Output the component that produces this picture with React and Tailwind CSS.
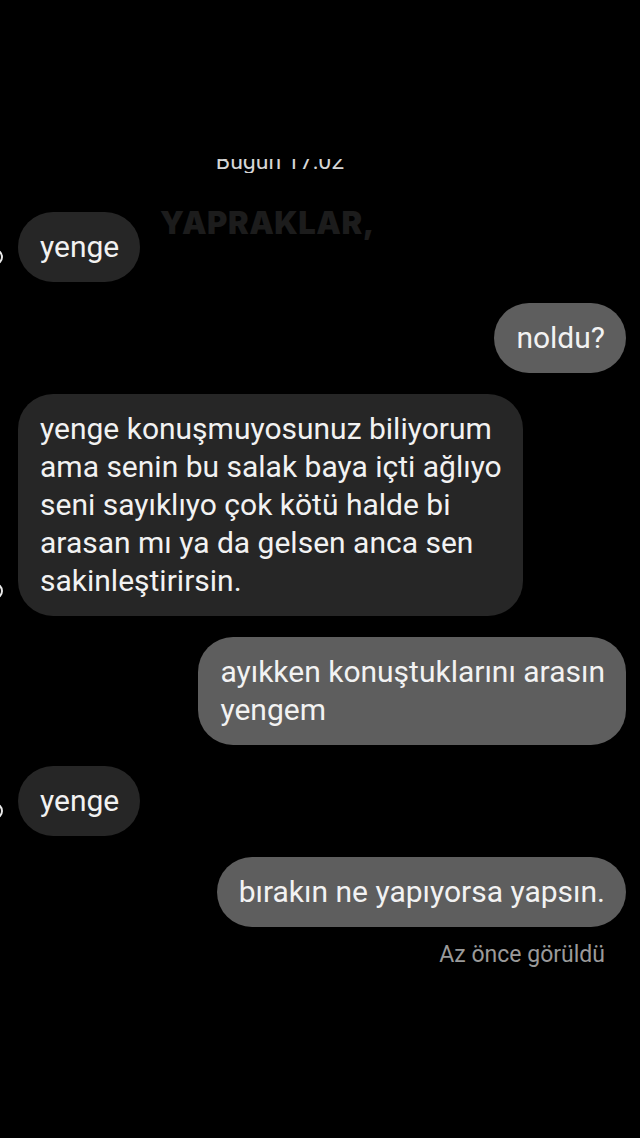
import React from 'react';

const messages = [
  { id: 1, side: 'left', lines: ['yenge'] },
  { id: 2, side: 'right', lines: ['noldu?'] },
  {
    id: 3,
    side: 'left',
    lines: [
      'yenge konuşmuyosunuz biliyorum',
      'ama senin bu salak baya içti ağlıyo',
      'seni sayıklıyo çok kötü halde bi',
      'arasan mı ya da gelsen anca sen',
      'sakinleştirirsin.',
    ],
  },
  { id: 4, side: 'right', lines: ['ayıkken konuştuklarını arasın', 'yengem'] },
  { id: 5, side: 'left', lines: ['yenge'] },
  { id: 6, side: 'right', lines: ['bırakın ne yapıyorsa yapsın.'] },
];

const Lines = ({ lines }) =>
  lines.map((line, i) => (
    <div key={i} className="whitespace-nowrap">
      {line}
    </div>
  ));

const Bubble = ({ msg }) => {
  if (msg.side === 'right') {
    return (
      <div className="flex justify-end pr-[14px]">
        <div className="rounded-[35px] bg-[#5e5e5e] py-4 pl-[22px] pr-[21px] text-[30px] leading-[38px] text-[#f2f2f2]">
          <Lines lines={msg.lines} />
        </div>
      </div>
    );
  }
  return (
    <div className="flex items-end">
      <div className="mb-[17px] h-[16px] w-[3px] overflow-hidden">
        <div className="-ml-[25px] h-[16px] w-[28px] rounded-full border-[2px] border-[#e8e8e8]" />
      </div>
      <div className="ml-[15px] rounded-[35px] bg-[#262626] py-4 pl-[22px] pr-[21px] text-[30px] leading-[38px] text-[#f2f2f2]">
        <Lines lines={msg.lines} />
      </div>
    </div>
  );
};

export default function App() {
  return (
    <div
      className="relative min-h-[1138px] w-[640px] overflow-hidden bg-black"
      style={{ fontFamily: 'Roboto, "Noto Sans", sans-serif' }}
    >
      <div className="h-[159px]" />
      <div className="flex h-[14px] items-end justify-center overflow-hidden pr-[80px]">
        <span className="text-[23px] leading-none text-[#d6d6d6]">Bugün 17:02</span>
      </div>

      <div
        className="absolute left-[160px] top-[200px] text-[31px] font-black tracking-[0.5px] text-[#1c1c1c]"
        style={{ fontFamily: 'Inter, "Noto Sans", sans-serif' }}
      >
        YAPRAKLAR,
      </div>

      <div className="mt-[39px] flex flex-col gap-[21px]">
        {messages.map((msg) => (
          <Bubble key={msg.id} msg={msg} />
        ))}
      </div>

      <div className="mt-[16px] flex justify-end pr-[35px]">
        <span className="text-[23px] leading-6 text-[#9a9a9a]">Az önce görüldü</span>
      </div>
    </div>
  );
}
